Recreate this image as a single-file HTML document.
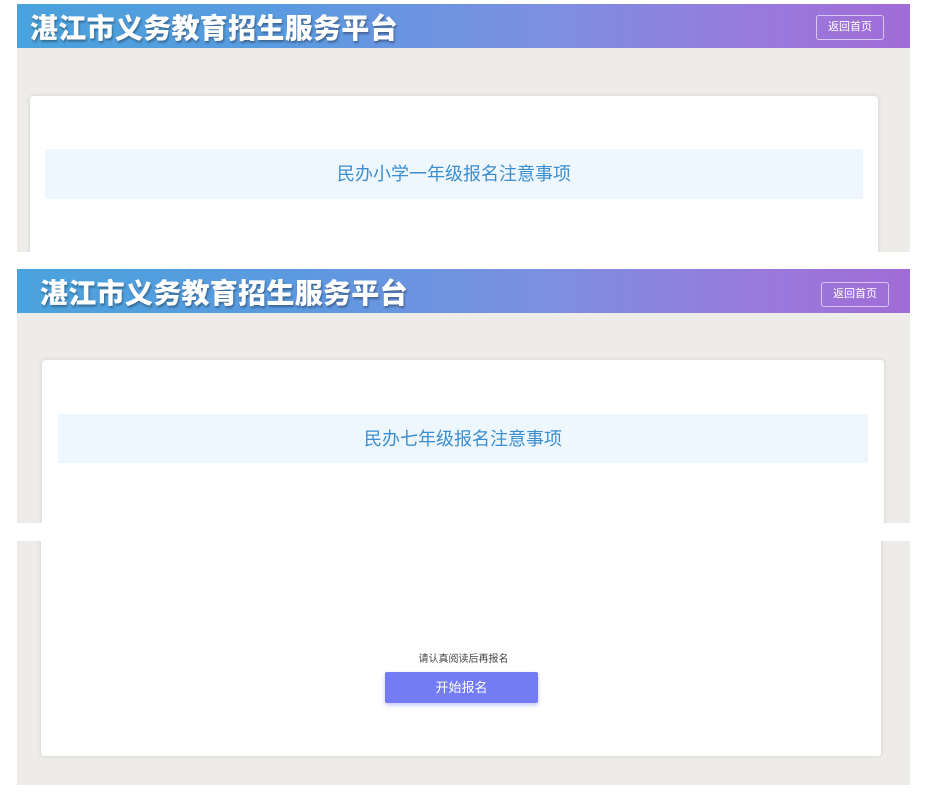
<!DOCTYPE html>
<html><head><meta charset="utf-8"><style>
*{margin:0;padding:0;box-sizing:border-box}
body{width:928px;height:797px;background:#fff;position:relative;overflow:hidden;font-family:"Liberation Sans","Noto Sans CJK SC",sans-serif}
.panel{position:absolute;left:17px;width:893px;background:#edece8;overflow:hidden}
.hdr{position:absolute;left:0;top:0;width:893px;height:44px;background:linear-gradient(90deg,#4aa3dc 0%,#5b9ae0 30%,#7d8fe0 60%,#9a78dc 85%,#a06cd6 100%)}
.hdr .t{position:absolute;left:13px;top:3px;font-size:28px;font-weight:900;color:#fff;letter-spacing:0.3px;text-shadow:1px 2px 2px rgba(0,0,0,.35);white-space:nowrap}
.hdr .b{position:absolute;top:11px;width:68px;height:25px;border:1px solid rgba(255,255,255,.6);border-radius:3px;color:#fff;font-size:11px;text-align:center;line-height:23px}
.card{position:absolute;background:#fff;box-shadow:0 0 4px rgba(0,0,0,.12);border-radius:3px}
.band{position:absolute;background:#eef6fe;color:#3b8fd0;font-size:18px;text-align:center;line-height:50px}
</style></head><body>
<div class="panel" style="top:4px;height:248px">
 <div class="hdr"><div class="t">湛江市义务教育招生服务平台</div><div class="b" style="left:799px">返回首页</div></div>
 <div class="card" style="left:13px;top:92px;width:848px;height:170px"></div>
 <div class="band" style="left:28px;top:145px;width:818px;height:50px">民办小学一年级报名注意事项</div>
</div>
<div class="panel" style="top:269px;height:254px">
 <div class="hdr"><div class="t" style="left:23px">湛江市义务教育招生服务平台</div><div class="b" style="left:804px;top:13px">返回首页</div></div>
 <div class="card" style="left:25px;top:91px;width:842px;height:180px"></div>
 <div class="band" style="left:41px;top:145px;width:810px;height:49px">民办七年级报名注意事项</div>
</div>
<div class="panel" style="top:541px;height:244px">
 <div class="card" style="left:24px;top:-5px;width:840px;height:220px"></div>
 <div style="position:absolute;left:0;width:893px;top:109px;text-align:center;font-size:10px;color:#444">请认真阅读后再报名</div>
 <div style="position:absolute;left:368px;top:131px;width:153px;height:31px;background:#737cf4;border-radius:2px;box-shadow:0 2px 4px rgba(80,90,230,.35);color:#fff;font-size:13px;text-align:center;line-height:31px">开始报名</div>
</div>
</body></html>
